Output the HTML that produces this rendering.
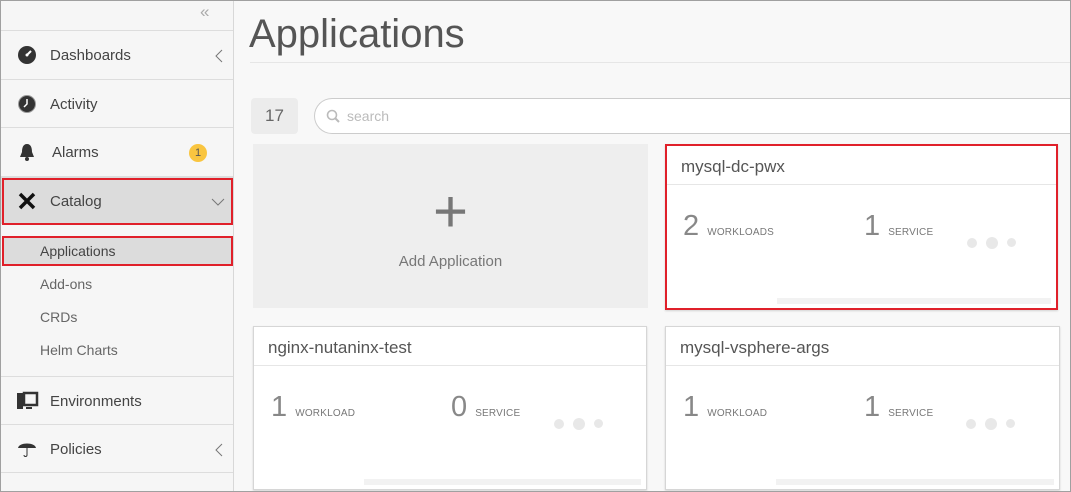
<!DOCTYPE html>
<html><head><style>
*{box-sizing:border-box;margin:0;padding:0}
html,body{width:1071px;height:492px;overflow:hidden}
body{background:#f8f8f8;font-family:"Liberation Sans",sans-serif;color:#555;position:relative}
.frame{position:absolute;left:0;top:0;width:1071px;height:492px;border:1px solid #a0a0a0;pointer-events:none;z-index:10}
.side{position:absolute;left:0;top:0;width:234px;height:492px;background:#f6f6f6;border-right:1px solid #d8d8d8;overflow:hidden}
.it{position:absolute;left:1px;width:232px;height:48px;border-top:1px solid #ddd;font-size:15px;color:#444}
.it span{position:absolute;left:49px;top:16px}
.ic{position:absolute;left:16px;top:14px}
.chev{position:absolute;right:10px;top:18px}
.sub{position:absolute;left:40px;font-size:14px;color:#666}
.card{position:absolute;background:#fff;border:1px solid #d6d6d6;box-shadow:0 1px 2px rgba(0,0,0,.15);overflow:hidden}
.card h3{font-weight:normal;font-size:17px;color:#555;padding:11px 14px;height:39px;border-bottom:1px solid #e6e6e6}
.num{position:absolute;top:64px;font-size:29px;color:#888;font-weight:300}
.num small{font-size:10px;color:#777;letter-spacing:.2px}
.dots{position:absolute;top:88px;left:300px}
.dots i{display:inline-block;background:#e8e8e8;border-radius:50%;vertical-align:middle;margin-right:9px}
.bar{position:absolute;bottom:4px;left:110px;right:5px;height:6px;background:#f2f2f2}
</style></head><body>
<div class="side">
<div style="position:absolute;left:200px;top:2px;color:#aaa;font-size:17px">«</div>
<div class="it" style="top:30px"><svg class="ic" width="20" height="20" viewBox="0 0 20 20"><circle cx="10" cy="10" r="9" fill="#333"/><path d="M10 10L14 6" stroke="#fff" stroke-width="2"/><circle cx="10" cy="10" r="1.5" fill="#fff"/></svg><span>Dashboards</span><svg class="chev" width="8" height="14" viewBox="0 0 8 14"><path d="M7 1L1 7L7 13" stroke="#777" fill="none"/></svg></div>
<div class="it" style="top:79px"><svg class="ic" width="20" height="20" viewBox="0 0 20 20"><circle cx="10" cy="10" r="8.5" fill="#333" stroke="#999" stroke-width="1"/><path d="M10 5V10L7 13" stroke="#fff" stroke-width="1.5" fill="none"/></svg><span>Activity</span></div>
<div class="it" style="top:127px"><svg class="ic" width="20" height="20" viewBox="0 0 20 20"><path d="M10 2C6 2 5 6 5 10L3 15H17L15 10C15 6 14 2 10 2Z" fill="#333"/><circle cx="10" cy="17" r="2" fill="#333"/></svg><span style="left:51px">Alarms</span><div style="position:absolute;left:188px;top:16px;width:18px;height:18px;border-radius:50%;background:#f9c540;font-size:11px;text-align:center;line-height:18px;color:#555">1</div></div>
<div class="it" style="top:176px;background:#dcdcdc"><svg class="ic" width="20" height="20" viewBox="0 0 20 20"><path d="M3 3L17 17M17 3L3 17" stroke="#111" stroke-width="3.5"/></svg><span>Catalog</span><svg class="chev" style="top:21px;right:8px" width="14" height="8" viewBox="0 0 14 8"><path d="M1 1L7 7L13 1" stroke="#777" fill="none"/></svg></div>
<div style="position:absolute;left:2px;top:178px;width:231px;height:47px;border:2px solid #e0202a"></div>
<div style="position:absolute;left:2px;top:236px;width:231px;height:30px;background:#dcdcdc;border:2px solid #e0202a"></div>
<div class="sub" style="top:243px;color:#444">Applications</div>
<div class="sub" style="top:276px">Add-ons</div>
<div class="sub" style="top:309px">CRDs</div>
<div class="sub" style="top:342px">Helm Charts</div>
<div class="it" style="top:376px"><svg class="ic" width="22" height="20" viewBox="0 0 22 20"><rect x="0" y="2" width="6" height="16" fill="#333"/><rect x="7" y="2" width="13" height="12" fill="none" stroke="#333" stroke-width="2.5"/><rect x="9" y="16" width="6" height="2" fill="#333"/></svg><span>Environments</span></div>
<div class="it" style="top:424px"><svg class="ic" width="20" height="20" viewBox="0 0 20 20"><path d="M1 9C2 3 18 3 19 9Z" fill="#333"/><path d="M10 9V16C10 18 7 18 7 16" stroke="#333" fill="none"/></svg><span>Policies</span><svg class="chev" width="8" height="14" viewBox="0 0 8 14"><path d="M7 1L1 7L7 13" stroke="#777" fill="none"/></svg></div>
<div class="it" style="top:472px;height:20px"></div>
</div>
<div style="position:absolute;left:249px;top:12px;font-size:40px;color:#555">Applications</div>
<div style="position:absolute;left:250px;top:62px;width:821px;height:1px;background:#e6e6e6"></div>
<div style="position:absolute;left:251px;top:98px;width:47px;height:36px;background:#ececec;border-radius:4px;font-size:17px;color:#666;text-align:center;line-height:36px">17</div>
<div style="position:absolute;left:314px;top:98px;width:757px;height:36px;background:#fff;border:1px solid #ccc;border-right:none;border-radius:18px 0 0 18px">
<svg style="position:absolute;left:11px;top:10px" width="14" height="14" viewBox="0 0 14 14"><circle cx="6" cy="6" r="4.5" stroke="#bbb" stroke-width="1.6" fill="none"/><path d="M9 9L13 13" stroke="#bbb" stroke-width="2"/></svg>
<span style="position:absolute;left:32px;top:9px;font-size:14px;color:#bbb">search</span></div>
<div style="position:absolute;left:253px;top:144px;width:395px;height:164px;background:#eee">
<div style="position:absolute;left:0;width:100%;top:38px;text-align:center;font-size:60px;color:#777;line-height:60px;font-weight:300">+</div>
<div style="position:absolute;left:0;width:100%;top:109px;text-align:center;font-size:15px;color:#777">Add Application</div></div>
<div class="card" style="left:665px;top:144px;width:393px;height:166px;border:2px solid #e0202a"><h3>mysql-dc-pwx</h3>
<div class="num" style="left:16px">2 <small>WORKLOADS</small></div><div class="num" style="left:197px">1 <small>SERVICE</small></div>
<div class="dots"><i style="width:10px;height:10px"></i><i style="width:12px;height:12px"></i><i style="width:9px;height:9px"></i></div><div class="bar"></div></div>
<div class="card" style="left:253px;top:326px;width:394px;height:164px"><h3>nginx-nutaninx-test</h3>
<div class="num" style="left:17px">1 <small>WORKLOAD</small></div><div class="num" style="left:197px">0 <small>SERVICE</small></div>
<div class="dots"><i style="width:10px;height:10px"></i><i style="width:12px;height:12px"></i><i style="width:9px;height:9px"></i></div><div class="bar" style="bottom:4px"></div></div>
<div class="card" style="left:665px;top:326px;width:395px;height:164px"><h3>mysql-vsphere-args</h3>
<div class="num" style="left:17px">1 <small>WORKLOAD</small></div><div class="num" style="left:198px">1 <small>SERVICE</small></div>
<div class="dots"><i style="width:10px;height:10px"></i><i style="width:12px;height:12px"></i><i style="width:9px;height:9px"></i></div><div class="bar" style="bottom:4px"></div></div>
<div class="frame"></div>
</body></html>
